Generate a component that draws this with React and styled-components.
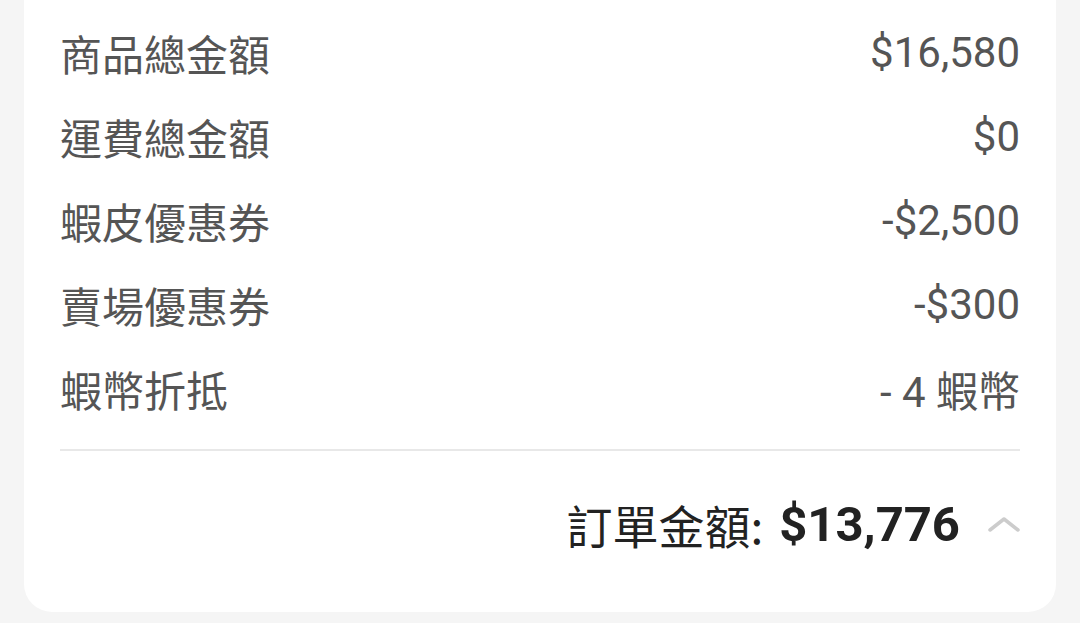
import React from "react";
import styled, { createGlobalStyle } from "styled-components";

const GlobalStyle = createGlobalStyle`
  html, body {
    margin: 0;
    padding: 0;
    background: #f5f5f5;
    font-family: Roboto, "Noto Sans CJK TC", sans-serif;
  }
`;

const rows = [
  { label: "商品總金額", value: "$16,580" },
  { label: "運費總金額", value: "$0" },
  { label: "蝦皮優惠券", value: "-$2,500" },
  { label: "賣場優惠券", value: "-$300" },
  { label: "蝦幣折抵", value: "- 4 蝦幣" },
];

export default function App() {
  return (
    <Page>
      <GlobalStyle />
      <Card>
        <List>
          {rows.map((r) => (
            <Row key={r.label}>
              <Label>{r.label}</Label>
              <Value>{r.value}</Value>
            </Row>
          ))}
        </List>
        <Divider />
        <TotalRow>
          <TotalLabel>訂單金額:</TotalLabel>
          <TotalValue>$13,776</TotalValue>
          <Chevron viewBox="0 0 32 16">
            <path d="M2 14 L16 3 L30 14" />
          </Chevron>
        </TotalRow>
      </Card>
    </Page>
  );
}

const Page = styled.div`
  width: 1080px;
  height: 623px;
  padding: 0 24px;
  box-sizing: border-box;
  overflow: hidden;
`;

const Card = styled.div`
  background: #fff;
  border-radius: 0 0 28px 28px;
  padding: 10px 36px 15px;
`;

const List = styled.div`
  display: flex;
  flex-direction: column;
`;

const Row = styled.div`
  height: 84px;
  display: flex;
  align-items: center;
  justify-content: space-between;
  color: #555;
  font-size: 42px;
`;

const Label = styled.span`
  font-family: "Noto Sans CJK TC", sans-serif;
`;

const Value = styled.span`
  font-family: Roboto, "Noto Sans CJK TC", sans-serif;
`;

const Divider = styled.div`
  height: 2px;
  background: #e8e8e8;
  margin-top: 19px;
`;

const TotalRow = styled.div`
  height: 146px;
  display: flex;
  align-items: center;
  justify-content: flex-end;
  color: #222;
  font-size: 46px;
`;

const TotalLabel = styled.span`
  font-family: "Noto Sans CJK TC", sans-serif;
  margin-right: 16px;
`;

const TotalValue = styled.span`
  font-family: Roboto, sans-serif;
  font-weight: 700;
  font-size: 49px;
`;

const Chevron = styled.svg`
  width: 32px;
  height: 16px;
  margin-left: 28px;
  fill: none;
  stroke: #cccccc;
  stroke-width: 3.5;
  stroke-linecap: round;
  stroke-linejoin: round;
`;
